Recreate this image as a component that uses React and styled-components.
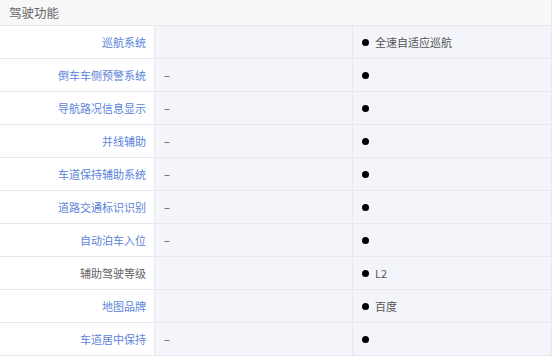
import React from "react";
import styled, { createGlobalStyle } from "styled-components";

const Global = createGlobalStyle`
  html, body { margin: 0; padding: 0; background: #fff; }
  body { font-family: "Noto Sans CJK SC", "Liberation Sans", sans-serif; }
`;

const Table = styled.div`
  width: 552px;
  border-right: 1px solid #e8e9ee;
  box-sizing: border-box;
`;

const Header = styled.div`
  height: 26px;
  box-sizing: border-box;
  background: #f8f8f8;
  border-bottom: 1px solid #e6e6e6;
  padding-left: 9px;
  display: flex;
  align-items: center;
  font-size: 12.5px;
  color: #666;
`;

const Row = styled.div`
  display: grid;
  grid-template-columns: 155px 198px 1fr;
  height: 33px;
  box-sizing: border-box;
  border-bottom: 1px solid #e8e9ee;
`;

const Label = styled.div`
  background: #fff;
  border-right: 1px solid #e8e9ee;
  display: flex;
  align-items: center;
  justify-content: flex-end;
  padding-right: 8px;
  font-size: 11px;
  color: ${(p) => (p.$link ? "#5b84d9" : "#666")};
`;

const Cell = styled.div`
  background: #f4f5fa;
  display: flex;
  align-items: center;
  padding-left: 9px;
  font-size: 11px;
  color: #555;
  border-right: ${(p) => (p.$mid ? "1px solid #e8e9ee" : "none")};
`;

const Dash = styled.span`
  color: #444;
`;

const Dot = styled.span`
  width: 7px;
  height: 7px;
  border-radius: 50%;
  background: #000;
  margin-right: 6px;
  flex: none;
`;

const rows = [
  { label: "巡航系统", mid: "", val: "全速自适应巡航" },
  { label: "倒车车侧预警系统", mid: "–", val: "" },
  { label: "导航路况信息显示", mid: "–", val: "" },
  { label: "并线辅助", mid: "–", val: "" },
  { label: "车道保持辅助系统", mid: "–", val: "" },
  { label: "道路交通标识识别", mid: "–", val: "" },
  { label: "自动泊车入位", mid: "–", val: "" },
  { label: "辅助驾驶等级", mid: "", val: "L2", plain: true },
  { label: "地图品牌", mid: "", val: "百度" },
  { label: "车道居中保持", mid: "–", val: "" },
];

export default function App() {
  return (
    <>
      <Global />
      <Table>
        <Header>驾驶功能</Header>
        {rows.map((r) => (
          <Row key={r.label}>
            <Label $link={!r.plain}>{r.label}</Label>
            <Cell $mid>{r.mid && <Dash>{r.mid}</Dash>}</Cell>
            <Cell>
              <Dot />
              {r.val}
            </Cell>
          </Row>
        ))}
      </Table>
    </>
  );
}
